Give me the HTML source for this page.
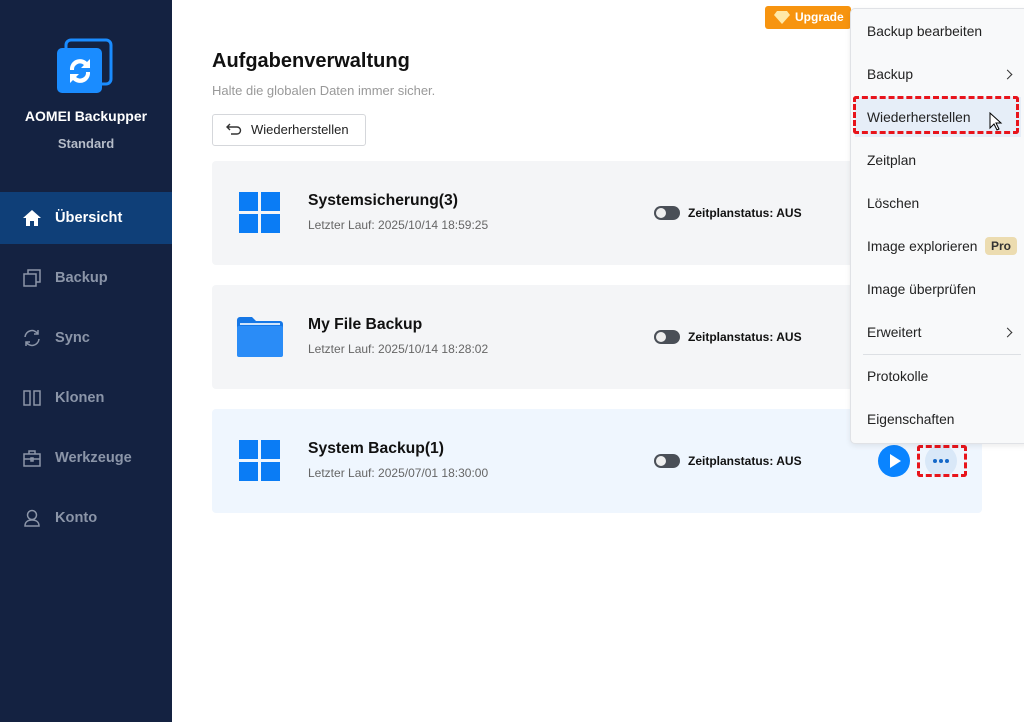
<!DOCTYPE html><html><head><style>
*{margin:0;padding:0;box-sizing:border-box}
body{width:1024px;height:722px;overflow:hidden;background:#fff;font-family:"Liberation Sans",sans-serif;position:relative}
.sb{position:absolute;left:0;top:0;width:172px;height:722px;background:#142241}
.nav{position:absolute;left:0;width:172px;height:52px;display:flex;align-items:center;color:#8b95a8;font-size:14.6px;font-weight:bold}
.nav svg{position:absolute;left:22px}
.nav span{position:absolute;left:55px}
.card{position:absolute;left:212px;width:770px;height:104px;background:#f4f5f7;border-radius:4px}
.t{position:absolute;left:96px;top:31px;font-size:15.7px;font-weight:bold;color:#111}
.s{position:absolute;left:96px;top:57px;font-size:12px;color:#666}
.tg{position:absolute;left:442px;top:45px;width:26px;height:14px;border-radius:7px;background:#4a4f57}
.tg::after{content:"";position:absolute;left:2px;top:2px;width:10px;height:10px;border-radius:5px;background:#eee}
.zs{position:absolute;left:476px;top:45px;font-size:12px;font-weight:bold;color:#111}
.menu{position:absolute;left:850px;top:8px;width:180px;height:436px;background:#f8f9fa;border:1px solid #e0e2e6;border-radius:5px;box-shadow:0 2px 6px rgba(0,0,0,.08)}
.mi{position:absolute;left:16px;font-size:13.8px;color:#222}
.ch{position:absolute;right:18px;width:7px;height:7px;border-right:1.6px solid #333;border-top:1.6px solid #333;transform:rotate(45deg)}
.dash{position:absolute;border:3px dashed #e8141b;border-radius:3px}
</style></head><body>
<div class="sb">
<svg style="position:absolute;left:56px;top:38px" width="58" height="56" viewBox="0 0 58 56"><rect x="10" y="2" width="45" height="44" rx="5" fill="none" stroke="#1a8cff" stroke-width="3"/><rect x="1" y="10" width="45" height="45" rx="5" fill="#1a8cff"/><path d="M14 32a10 10 0 0 1 17-8l3-3v9h-9l3-3a6 6 0 0 0-10 5z M34 34a10 10 0 0 1-17 8l-3 3v-9h9l-3 3a6 6 0 0 0 10-5z" fill="#fff"/></svg>
<div style="position:absolute;left:0;width:172px;top:108px;text-align:center;color:#fff;font-weight:bold;font-size:14px">AOMEI Backupper</div>
<div style="position:absolute;left:0;width:172px;top:136px;text-align:center;color:#b5bcc8;font-weight:bold;font-size:13px">Standard</div>
<div class="nav" style="top:192px;background:#0f3f78;color:#fff"><svg width="20" height="18" viewBox="0 0 20 18"><path d="M10 1L1 9h3v8h4v-5h4v5h4V9h3z" fill="#fff"/></svg><span>Übersicht</span></div>
<div class="nav" style="top:252px"><svg width="20" height="20" viewBox="0 0 20 20" fill="none" stroke="#8b95a8" stroke-width="1.5"><rect x="2" y="6" width="12" height="12"/><path d="M6 6V2h12v12h-4"/></svg><span>Backup</span></div>
<div class="nav" style="top:312px"><svg width="20" height="20" viewBox="0 0 20 20" fill="none" stroke="#8b95a8" stroke-width="1.5"><path d="M3 9a7 7 0 0 1 13-3M17 11a7 7 0 0 1-13 3M16 2v4h-4M4 18v-4h4"/></svg><span>Sync</span></div>
<div class="nav" style="top:372px"><svg width="20" height="20" viewBox="0 0 20 20" fill="none" stroke="#8b95a8" stroke-width="1.5"><rect x="2" y="3" width="6" height="14"/><rect x="12" y="3" width="6" height="14"/></svg><span>Klonen</span></div>
<div class="nav" style="top:432px"><svg width="20" height="20" viewBox="0 0 20 20" fill="none" stroke="#8b95a8" stroke-width="1.5"><rect x="2" y="6" width="16" height="12"/><path d="M7 6V3h6v3M2 11h16"/><rect x="9" y="10" width="2" height="3"/></svg><span>Werkzeuge</span></div>
<div class="nav" style="top:492px"><svg width="20" height="20" viewBox="0 0 20 20" fill="none" stroke="#8b95a8" stroke-width="1.5"><circle cx="10" cy="7" r="4.5"/><path d="M3 18c0-4 3-6 7-6s7 2 7 6z"/></svg><span>Konto</span></div>
</div>
<div style="position:absolute;left:765px;top:6px;width:86px;height:23px;background:#f7940f;border-radius:3px;color:#fff;font-size:12px;font-weight:bold;line-height:23px;padding-left:30px">Upgrade</div>
<svg style="position:absolute;left:773px;top:10px" width="18" height="15" viewBox="0 0 18 15"><path d="M4 1h10l3 4-8 9-8-9z" fill="#ffe9a8"/></svg>
<div style="position:absolute;left:212px;top:50px;font-size:20px;font-weight:bold;color:#111">Aufgabenverwaltung</div>
<div style="position:absolute;left:212px;top:83px;font-size:13px;color:#999">Halte die globalen Daten immer sicher.</div>
<div style="position:absolute;left:212px;top:114px;width:154px;height:32px;border:1px solid #d5d7db;border-radius:3px;font-size:13px;color:#222;line-height:30px;padding-left:38px">Wiederherstellen</div>
<svg style="position:absolute;left:226px;top:123px" width="16" height="12" viewBox="0 0 16 12" fill="none" stroke="#333" stroke-width="1.4"><path d="M4 1L1 4l3 3M1 4h10a3.5 3.5 0 0 1 0 7H5"/></svg>
<div class="card" style="top:161px"><svg style="position:absolute;left:27px;top:31px" width="42" height="42"><g fill="#0a7cf5"><rect width="19" height="19"/><rect x="22" width="19" height="19"/><rect y="22" width="19" height="19"/><rect x="22" y="22" width="19" height="19"/></g></svg><div class="t">Systemsicherung(3)</div><div class="s">Letzter Lauf: 2025/10/14 18:59:25</div><div class="tg"></div><div class="zs">Zeitplanstatus: AUS</div></div>
<div class="card" style="top:285px"><svg style="position:absolute;left:25px;top:32px" width="46" height="40" viewBox="0 0 46 40"><path d="M0 3a3 3 0 0 1 3-3h12l4 4h24a3 3 0 0 1 3 3v30a3 3 0 0 1-3 3H3a3 3 0 0 1-3-3z" fill="#1577e6"/><rect x="0" y="9" width="46" height="31" rx="2" fill="#2a8cf7"/><rect x="3" y="6" width="40" height="2" fill="#cfe4fb"/></svg><div class="t">My File Backup</div><div class="s">Letzter Lauf: 2025/10/14 18:28:02</div><div class="tg"></div><div class="zs">Zeitplanstatus: AUS</div></div>
<div class="card" style="top:409px;background:#eff6fe"><svg style="position:absolute;left:27px;top:31px" width="42" height="42"><g fill="#0a7cf5"><rect width="19" height="19"/><rect x="22" width="19" height="19"/><rect y="22" width="19" height="19"/><rect x="22" y="22" width="19" height="19"/></g></svg><div class="t">System Backup(1)</div><div class="s">Letzter Lauf: 2025/07/01 18:30:00</div><div class="tg"></div><div class="zs">Zeitplanstatus: AUS</div>
<svg style="position:absolute;left:666px;top:36px" width="32" height="32"><circle cx="16" cy="16" r="16" fill="#0a84ff"/><path d="M12 9v14l11-7z" fill="#fff"/></svg>
<svg style="position:absolute;left:713px;top:36px" width="32" height="32"><circle cx="16" cy="16" r="16" fill="#d9e8f8"/><g fill="#1468c8"><circle cx="10" cy="16" r="2"/><circle cx="16" cy="16" r="2"/><circle cx="22" cy="16" r="2"/></g></svg></div>
<div class="dash" style="left:917px;top:445px;width:50px;height:32px"></div>
<div class="menu">
<div class="mi" style="top:15px">Backup bearbeiten</div>
<div class="mi" style="top:58px">Backup</div><div class="ch" style="top:62px"></div>
<div style="position:absolute;left:4px;top:88px;width:166px;height:40px;background:#e6eef8"></div>
<div class="mi" style="top:101px">Wiederherstellen</div>
<div class="mi" style="top:144px">Zeitplan</div>
<div class="mi" style="top:187px">Löschen</div>
<div class="mi" style="top:230px">Image explorieren</div><div style="position:absolute;left:134px;top:228px;width:32px;height:18px;background:#ecdcb0;border-radius:4px;font-size:12px;font-weight:bold;color:#333;text-align:center;line-height:18px">Pro</div>
<div class="mi" style="top:273px">Image überprüfen</div>
<div class="mi" style="top:316px">Erweitert</div><div class="ch" style="top:320px"></div>
<div style="position:absolute;left:12px;top:345px;width:158px;height:1px;background:#dde0e4"></div>
<div class="mi" style="top:360px">Protokolle</div>
<div class="mi" style="top:403px">Eigenschaften</div>
</div>
<div class="dash" style="left:853px;top:96px;width:166px;height:38px"></div>
<svg style="position:absolute;left:989px;top:112px" width="14" height="20" viewBox="0 0 14 20"><path d="M1 1v15l4-4 3 6 2-1-3-6h5z" fill="#fff" stroke="#000"/></svg>
</body></html>
